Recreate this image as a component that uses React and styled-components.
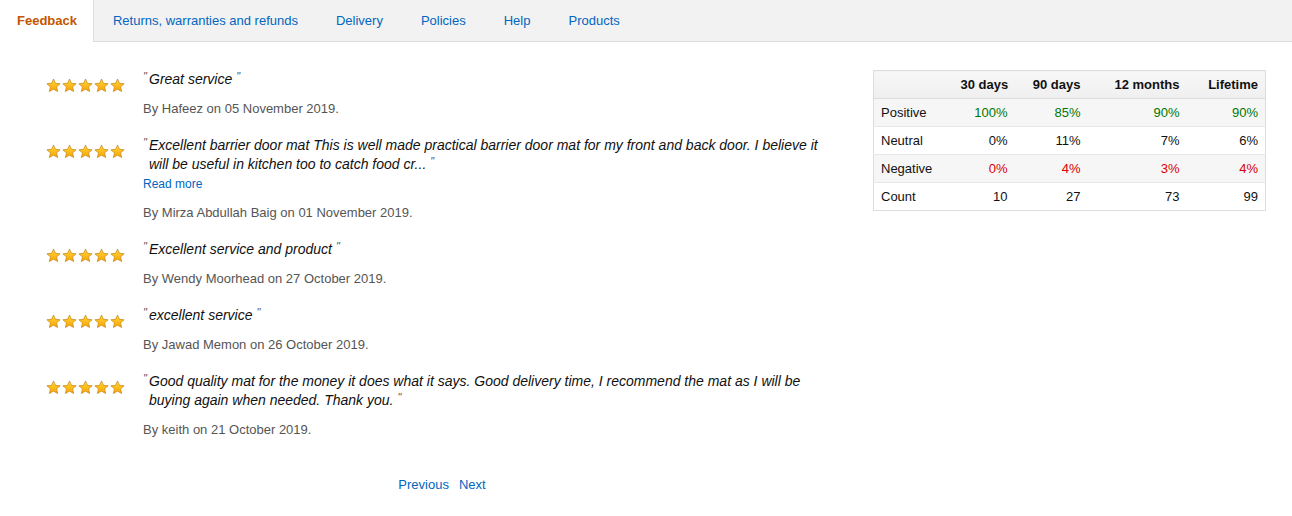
import React from "react";
import styled, { createGlobalStyle } from "styled-components";

const Global = createGlobalStyle`
  html, body { margin: 0; padding: 0; background: #fff; }
  body { font-family: "Liberation Sans", Arial, sans-serif; color: #111; }
`;

const TabBar = styled.div`
  display: flex;
  height: 41px;
  background: #f2f2f2;
  border-bottom: 1px solid #ddd;
`;

const Tab = styled.div`
  display: flex;
  align-items: center;
  padding: ${(p) => (p.$active ? "0 16px 1px 17px" : "0 19px")};
  font-size: 13px;
  color: ${(p) => (p.$active ? "#c45500" : "#0066c0")};
  font-weight: ${(p) => (p.$active ? 700 : 400)};
  background: ${(p) => (p.$active ? "#fff" : "transparent")};
  border-right: ${(p) => (p.$active ? "1px solid #ddd" : "none")};
  margin-bottom: ${(p) => (p.$active ? "-1px" : "0")};
`;

const Main = styled.div`
  display: flex;
  justify-content: space-between;
  padding: 28px 26px 0 46px;
`;

const LeftCol = styled.div`
  width: 792px;
  flex-shrink: 0;
  display: flex;
  flex-direction: column;
`;

const Review = styled.div`
  display: flex;
  margin-bottom: 18px;
`;

const Stars = styled.div`
  display: flex;
  gap: 1px;
  width: 97px;
  flex-shrink: 0;
  padding-top: 8px;
  align-self: flex-start;
`;

const Body = styled.div`
  flex: 1;
`;

const Quote = styled.div`
  font-style: italic;
  font-size: 14px;
  line-height: 19px;
  color: #111;
  padding-left: 6px;
  text-indent: -6px;
`;

const Mark = styled.span`
  font-size: 11px;
  line-height: 0;
  color: #555;
  position: relative;
  top: -4px;
  display: inline-block;
  text-indent: 0;
  width: 6px;
`;

const EndMark = styled.span`
  font-size: 11px;
  line-height: 0;
  color: #555;
  position: relative;
  top: -4px;
  margin-left: 4px;
`;

const Link = styled.a`
  color: #0066c0;
  font-size: 13px;
  line-height: 19px;
  text-decoration: none;
  cursor: pointer;
`;

const ReadMore = styled.div`
  font-size: 12px;
  line-height: 20px;
  color: #0066c0;
`;

const Byline = styled.div`
  margin-top: ${(p) => (p.$tight ? "9px" : "10px")};
  font-size: 13px;
  line-height: 19px;
  color: #555;
`;

const Pager = styled.div`
  display: flex;
  justify-content: center;
  gap: 10px;
  margin-top: 18px;
`;

const Table = styled.table`
  border-collapse: collapse;
  table-layout: fixed;
  width: 392px;
  flex-shrink: 0;
  font-size: 13px;
  align-self: flex-start;
  border: 1px solid #ddd;
  white-space: nowrap;
`;

const Th = styled.th`
  box-sizing: border-box;
  height: 28px;
  padding: 0 7px;
  text-align: right;
  font-weight: 700;
  color: #111;
  background: linear-gradient(#f7f7f7, #efefef);
  border-bottom: 1px solid #ddd;
  width: ${(p) => p.$w}px;
`;

const Tr = styled.tr`
  background: ${(p) => (p.$shade ? "#f6f6f6" : "#fff")};
  border-top: 1px solid #e7e7e7;
`;

const Td = styled.td`
  height: 27px;
  padding: 0 7px;
  text-align: ${(p) => (p.$left ? "left" : "right")};
  color: ${(p) =>
    p.$tone === "pos" ? "#007600" : p.$tone === "neg" ? "#d80000" : "#111"};
`;

const Star = () => (
  <svg width="15" height="15" viewBox="0 0 24 24">
    <defs>
      <linearGradient id="sg" x1="0" y1="0" x2="0" y2="1">
        <stop offset="0" stopColor="#ffd83d" />
        <stop offset="1" stopColor="#f7a400" />
      </linearGradient>
    </defs>
    <path
      d="M12 1.6l3.1 6.9 7.5.7-5.7 5 1.7 7.4L12 17.8l-6.6 3.8 1.7-7.4-5.7-5 7.5-.7z"
      fill="url(#sg)"
      stroke="#c98a1b"
      strokeWidth="1.2"
      strokeLinejoin="round"
    />
  </svg>
);

const reviews = [
  { text: "Great service", by: "Hafeez", date: "05 November 2019" },
  {
    text:
      "Excellent barrier door mat This is well made practical barrier door mat for my front and back door. I believe it will be useful in kitchen too to catch food cr...",
    by: "Mirza Abdullah Baig",
    date: "01 November 2019",
    more: true,
  },
  { text: "Excellent service and product", by: "Wendy Moorhead", date: "27 October 2019" },
  { text: "excellent service", by: "Jawad Memon", date: "26 October 2019" },
  {
    text:
      "Good quality mat for the money it does what it says. Good delivery time, I recommend the mat as I will be buying again when needed. Thank you.",
    by: "keith",
    date: "21 October 2019",
  },
];

const tabs = ["Feedback", "Returns, warranties and refunds", "Delivery", "Policies", "Help", "Products"];

const cols = [
  { label: "", w: 80 },
  { label: "30 days", w: 61 },
  { label: "90 days", w: 73 },
  { label: "12 months", w: 99 },
  { label: "Lifetime", w: 79 },
];

const rows = [
  { label: "Positive", vals: ["100%", "85%", "90%", "90%"], tone: "pos", shade: true },
  { label: "Neutral", vals: ["0%", "11%", "7%", "6%"] },
  { label: "Negative", vals: ["0%", "4%", "3%", "4%"], tone: "neg", shade: true },
  { label: "Count", vals: ["10", "27", "73", "99"] },
];

export default function App() {
  return (
    <>
      <Global />
      <TabBar>
        {tabs.map((t, i) => (
          <Tab key={t} $active={i === 0}>
            {t}
          </Tab>
        ))}
      </TabBar>
      <Main>
        <LeftCol>
          {reviews.map((r) => (
            <Review key={r.by}>
              <Stars>
                {[0, 1, 2, 3, 4].map((i) => (
                  <Star key={i} />
                ))}
              </Stars>
              <Body>
                <Quote>
                  <Mark>"</Mark>
                  {r.text}
                  <EndMark>"</EndMark>
                </Quote>
                {r.more && <ReadMore>Read more</ReadMore>}
                <Byline $tight={r.more}>
                  By {r.by} on {r.date}.
                </Byline>
              </Body>
            </Review>
          ))}
          <Pager>
            <Link>Previous</Link>
            <Link>Next</Link>
          </Pager>
        </LeftCol>
        <Table>
          <thead>
            <tr>
              {cols.map((c) => (
                <Th key={c.label} $w={c.w}>
                  {c.label}
                </Th>
              ))}
            </tr>
          </thead>
          <tbody>
            {rows.map((r) => (
              <Tr key={r.label} $shade={r.shade}>
                <Td $left>{r.label}</Td>
                {r.vals.map((v, i) => (
                  <Td key={i} $tone={r.tone}>
                    {v}
                  </Td>
                ))}
              </Tr>
            ))}
          </tbody>
        </Table>
      </Main>
    </>
  );
}
